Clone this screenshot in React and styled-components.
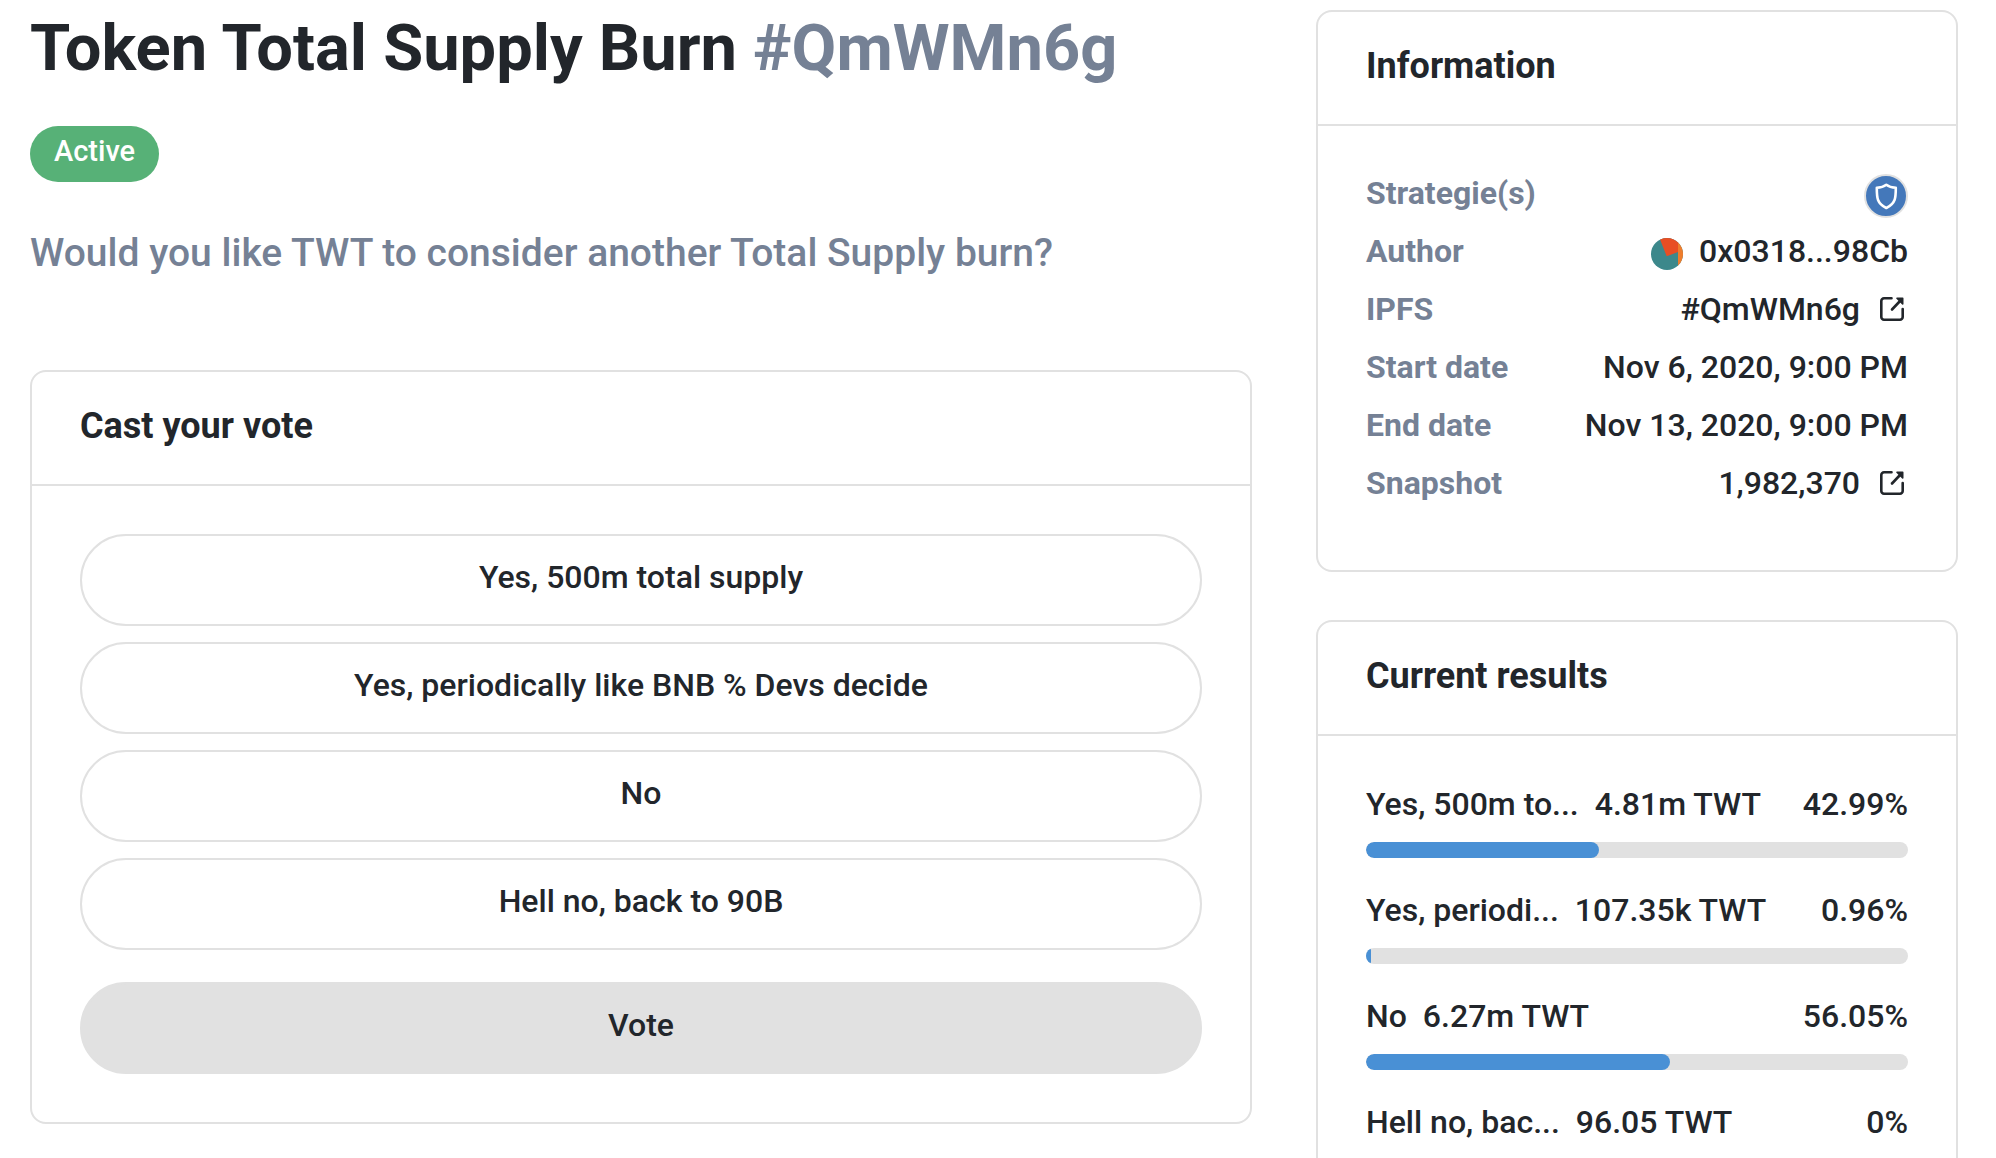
import React from 'react'
import styled, { createGlobalStyle } from 'styled-components'

const choices = [
    'Yes, 500m total supply',
    'Yes, periodically like BNB % Devs decide',
    'No',
    'Hell no, back to 90B',
];

const results = [
    { name: 'Yes, 500m to...', amount: '4.81m TWT', percent: 42.99 },
    { name: 'Yes, periodi...', amount: '107.35k TWT', percent: 0.96 },
    { name: 'No', amount: '6.27m TWT', percent: 56.05 },
    { name: 'Hell no, bac...', amount: '96.05 TWT', percent: 0 },
];

const ExternalIcon = () => (
    <svg width="24" height="24" viewBox="0 0 24 24" fill="none" stroke="currentColor" strokeWidth="2.6" strokeLinecap="round" aria-hidden="true">
        <path d="M11.500 1.300H4A2.700 2.700 0 0 0 1.300 4v16A2.700 2.700 0 0 0 4 22.700h16a2.700 2.700 0 0 0 2.700-2.700v-8" />
        <path d="M12 12.500L21 3" />
        <path d="M17 1.300h5.700v5.700Z" fill="currentColor" strokeWidth="1.6" strokeLinejoin="round" />
    </svg>
)

const ShieldIcon = () => (
    <svg width="44" height="44" viewBox="0 0 44 44" role="img" aria-label="Strategy">
        <circle cx="22" cy="22" r="21" fill="#4478ba" stroke="#e1e1e1" strokeWidth="2" />
        <path
            d="M22.300 10.800C19.200 13.200 16 13.600 12.800 13.700C12.800 24 13 29.500 22.300 34C31.600 29.500 31.800 24 31.800 13.700C28.600 13.600 25.400 13.200 22.300 10.800Z"
            fill="none" stroke="#fff" strokeWidth="2.6" strokeLinejoin="round"
        />
    </svg>
)

const Avatar = () => (
    <svg width="32" height="32" viewBox="0 0 32 32" aria-hidden="true">
        <clipPath id="round"><circle cx="16" cy="16" r="16" /></clipPath>
        <g clipPath="url(#round)">
            <rect width="32" height="32" fill="#3c888b" />
            <path d="M8.500 0L15.700 18.300L27 14V0Z" fill="#e84e24" />
            <rect x="27" width="5" height="32" fill="#ee7d2d" />
        </g>
    </svg>
)

const App = () => {

    const bars = results.map(item => (
        <Result key={item.name}>
            <ResultText>
                <span>{item.name}</span>
                <span>{item.amount}</span>
                <Percent>{item.percent}%</Percent>
            </ResultText>
            <Track><Fill style={{ width: `${item.percent}%` }} /></Track>
        </Result>
    ));

    return (
        <Page>
            <GlobalStyle />
            <Main>
                <Title>Token Total Supply Burn <span>#QmWMn6g</span></Title>
                <State>Active</State>
                <Body>Would you like TWT to consider another Total Supply burn?</Body>
                <Card>
                    <CardTitle>Cast your vote</CardTitle>
                    <CardBody>
                        <Choices>
                            {choices.map(choice => (<Button type="button" key={choice}>{choice}</Button>))}
                        </Choices>
                        <Button type="button" $filled>Vote</Button>
                    </CardBody>
                </Card>
            </Main>
            <Sidebar>
                <Card>
                    <CardTitle>Information</CardTitle>
                    <CardBody as="dl">
                        <Row><dt>Strategie(s)</dt><dd><ShieldIcon /></dd></Row>
                        <Row><dt>Author</dt><dd><Avatar /><a href="#author"><span>0x0318...98Cb</span></a></dd></Row>
                        <Row><dt>IPFS</dt><dd><a href="#ipfs"><span>#QmWMn6g</span><ExternalIcon /></a></dd></Row>
                        <Row><dt>Start date</dt><dd><span>Nov 6, 2020, 9:00 PM</span></dd></Row>
                        <Row><dt>End date</dt><dd><span>Nov 13, 2020, 9:00 PM</span></dd></Row>
                        <Row><dt>Snapshot</dt><dd><a href="#snapshot"><span>1,982,370</span><ExternalIcon /></a></dd></Row>
                    </CardBody>
                </Card>
                <Card>
                    <CardTitle>Current results</CardTitle>
                    <CardBody>{bars}</CardBody>
                </Card>
            </Sidebar>
        </Page>
    )
}

export default App;

const GlobalStyle = createGlobalStyle`
    * {
        box-sizing: border-box;
    }

    body {
        margin: 0;
        background: #fff;
        color: #22262b;
        font-family: Roboto, "Liberation Sans", sans-serif;
        font-size: 32px;
        font-weight: 500;
        line-height: 40px;
    }

    h1, h2, p, dl, dd {
        margin: 0;
    }
`;

const Page = styled.div`
    display: flex;
    align-items: flex-start;
    gap: 64px;
    padding: 10px 38px 40px 30px;
`;

const Main = styled.main`
    flex: 1;
    min-width: 0;
`;

const Sidebar = styled.aside`
    display: flex;
    flex-direction: column;
    gap: 48px;
    flex: 0 1 642px;
`;

const Title = styled.h1`
    font-size: 65px;
    line-height: 76px;
    font-weight: 700;

    span {
        color: #758195;
    }
`;

const State = styled.div`
    display: inline-block;
    height: 56px;
    margin-top: 40px;
    padding: 5px 24px;
    border-radius: 28px;
    background: #57b177;
    color: #fff;
    font-size: 29px;
`;

const Body = styled.p`
    margin: 40px 0 86px;
    color: #758195;
    font-size: 39px;
    line-height: 62px;
`;

const Card = styled.section`
    border: 2px solid #e1e1e1;
    border-radius: 16px;
`;

const CardTitle = styled.h2`
    height: 114px;
    padding: 30px 48px;
    border-bottom: 2px solid #e1e1e1;
    font-size: 36px;
    line-height: 48px;
    font-weight: 700;
`;

const CardBody = styled.div`
    padding: 48px;
`;

const Choices = styled.div`
    display: flex;
    flex-direction: column;
    gap: 16px;
    margin-bottom: 32px;
`;

const Button = styled.button`
    display: block;
    width: 100%;
    height: 92px;
    padding: 0 48px 6px;
    border: 2px solid #e1e1e1;
    border-radius: 46px;
    background: ${props => props.$filled ? '#e1e1e1' : 'transparent'};
    color: inherit;
    font: inherit;
    cursor: pointer;
`;

const Row = styled.div`
    display: flex;
    justify-content: space-between;
    height: 58px;
    line-height: 38px;

    dt {
        color: #758195;
        font-weight: 700;
    }

    dd, a {
        display: flex;
        align-items: center;
        gap: 16px;
        height: 44px;
    }

    a {
        color: inherit;
        text-decoration: none;
    }

    span, a svg {
        margin-bottom: 6px;
    }

    a svg {
        margin-left: 4px;
        margin-right: 4px;
    }
`;

const Result = styled.div`
    margin-bottom: 32px;
`;

const ResultText = styled.div`
    display: flex;
    gap: 16px;
    margin-bottom: 18px;
    white-space: nowrap;
`;

const Percent = styled.span`
    margin-left: auto;
`;

const Track = styled.div`
    height: 16px;
    border-radius: 8px;
    background: #e1e1e1;
    overflow: hidden;
`;

const Fill = styled.div`
    height: 100%;
    border-radius: 8px;
    background: #4990d5;
`;
